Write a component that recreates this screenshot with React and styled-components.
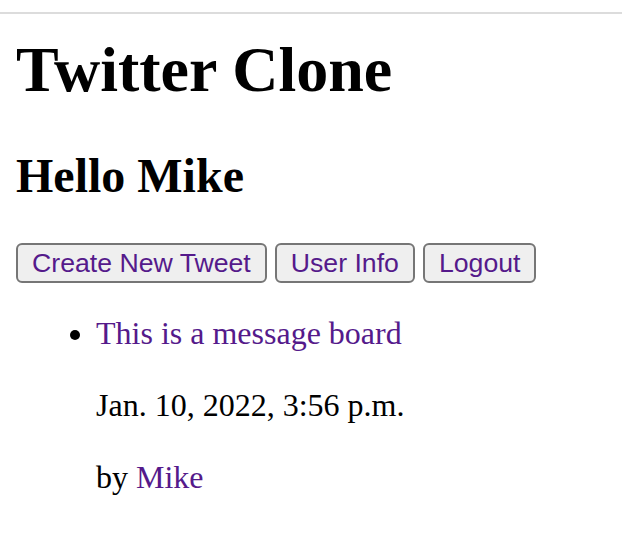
import React from "react";
import styled, { createGlobalStyle } from "styled-components";

const GlobalStyle = createGlobalStyle`
  html, body {
    margin: 0;
    padding: 0;
    background: #ffffff;
  }
  body {
    font-family: "Liberation Serif", "Times New Roman", serif;
    color: #000;
  }
`;

const TopRule = styled.div`
  margin-top: 12px;
  height: 2px;
  background: #dcdcdc;
`;

const Page = styled.main`
  padding: 0 16px;
`;

const Title = styled.h1`
  margin: 24px 0 0;
  font-size: 64px;
  line-height: 64px;
  font-weight: 700;
`;

const Greeting = styled.h2`
  margin: 50px 0 0;
  font-size: 48px;
  line-height: 48px;
  font-weight: 700;
`;

const Toolbar = styled.nav`
  display: flex;
  gap: 8px;
  margin-top: 43px;
`;

const Button = styled.button`
  height: 40px;
  padding: 0 14px;
  border: 2px solid #767676;
  border-radius: 6px;
  background: #efefef;
  color: #551a8b;
  font-family: "Liberation Sans", Arial, sans-serif;
  font-size: 26.67px;
  line-height: 36px;
  cursor: pointer;
`;

const TweetList = styled.ul`
  margin: 30px 0 0;
  padding-left: 80px;
  list-style: disc;
  font-size: 32px;
  line-height: 40px;
`;

const Tweet = styled.li``;

const Link = styled.a`
  color: #551a8b;
  text-decoration: none;
`;

const Meta = styled.p`
  margin: 32px 0 0;
`;

const tweets = [
  { id: 1, text: "This is a message board", date: "Jan. 10, 2022, 3:56 p.m.", author: "Mike" },
];

export default function App() {
  return (
    <>
      <GlobalStyle />
      <TopRule />
      <Page>
        <Title>Twitter Clone</Title>
        <Greeting>Hello Mike</Greeting>
        <Toolbar>
          <Button>Create New Tweet</Button>
          <Button>User Info</Button>
          <Button>Logout</Button>
        </Toolbar>
        <TweetList>
          {tweets.map((t) => (
            <Tweet key={t.id}>
              <Link href="#">{t.text}</Link>
              <Meta>{t.date}</Meta>
              <Meta>
                by <Link href="#">{t.author}</Link>
              </Meta>
            </Tweet>
          ))}
        </TweetList>
      </Page>
    </>
  );
}
